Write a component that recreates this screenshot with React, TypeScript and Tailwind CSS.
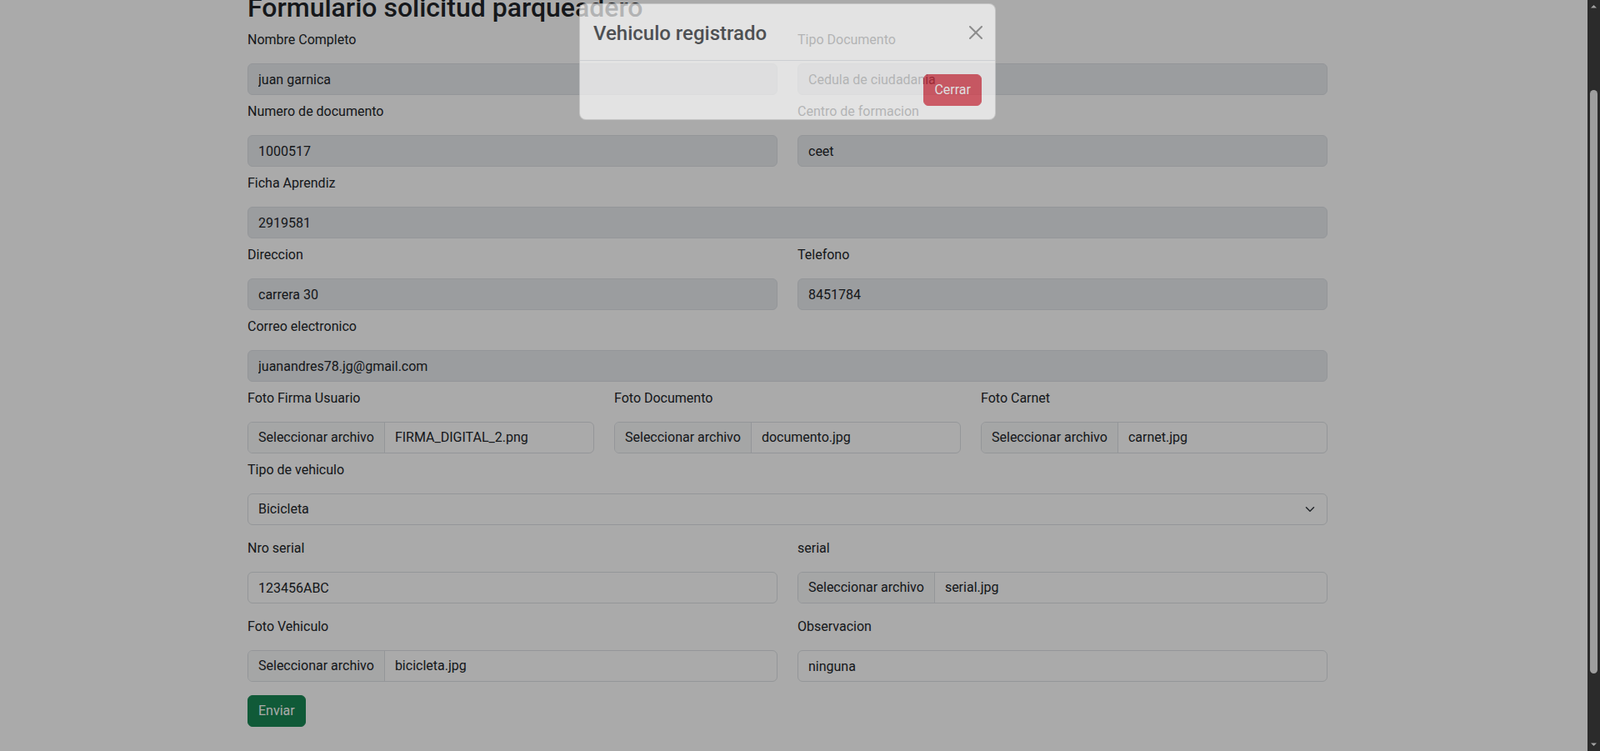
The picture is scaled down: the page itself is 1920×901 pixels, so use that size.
import type { ReactNode } from 'react'

// Bootstrap-style parking request form, captured mid-fade of a "registered" modal.
const labelCls = 'block mb-4 text-base leading-6 text-[#212529]'
const inputCls =
  'block h-[38px] w-full rounded-md border border-[#dee2e6] px-3 text-base leading-6 text-[#212529] outline-none'

function Field({ label, children, last }: { label: string; children: ReactNode; last?: boolean }) {
  return (
    <div className={last ? 'mb-4' : 'mb-2'}>
      <label className={labelCls}>{label}</label>
      {children}
    </div>
  )
}

function TextInput({ value, disabled }: { value: string; disabled?: boolean }) {
  return (
    <input
      readOnly
      value={value}
      className={disabled ? `${inputCls} bg-[#e9ecef]` : `${inputCls} bg-white`}
    />
  )
}

function FileInput({ name }: { name: string }) {
  return (
    <div className="flex h-[38px] w-full items-stretch overflow-hidden rounded-md border border-[#dee2e6] bg-white text-base leading-6 text-[#212529]">
      <span className="flex items-center border-r border-[#dee2e6] bg-[#f8f9fa] px-3">Seleccionar archivo</span>
      <span className="flex items-center px-3">{name}</span>
    </div>
  )
}

function Scrollbar() {
  return (
    <div className="flex h-[901px] w-[15px] shrink-0 flex-col items-center bg-[#2b2b2b]">
      <svg width="15" height="15" viewBox="0 0 15 15" className="shrink-0">
        <path d="M4 9.5 7.5 6 11 9.5Z" fill="#a3a3a3" />
      </svg>
      <div className="mt-[93px] h-[700px] w-[9px] rounded-full bg-[#9e9e9e]" />
      <svg width="15" height="15" viewBox="0 0 15 15" className="mt-auto shrink-0">
        <path d="M4 5.5 7.5 9 11 5.5Z" fill="#a3a3a3" />
      </svg>
    </div>
  )
}

function Modal() {
  return (
    <div className="absolute inset-0 pr-[15px]">
      <div className="mx-auto mt-[4px] w-[500px] rounded-lg border border-black/[0.175] bg-white opacity-[0.67]">
        <div className="flex h-[68px] items-center justify-between border-b border-[#dee2e6] pl-4 pr-[15px]">
          <h4 className="mt-[2px] text-2xl font-medium leading-9 text-[#212529]">Vehiculo registrado</h4>
          <button type="button" aria-label="Close" className="opacity-50">
            <svg width="16" height="16" viewBox="0 0 16 16">
              <path
                d="M.293.293a1 1 0 0 1 1.414 0L8 6.586 14.293.293a1 1 0 1 1 1.414 1.414L9.414 8l6.293 6.293a1 1 0 0 1-1.414 1.414L8 9.414l-6.293 6.293a1 1 0 0 1-1.414-1.414L6.586 8 .293 1.707a1 1 0 0 1 0-1.414"
                fill="#000"
              />
            </svg>
          </button>
        </div>
        <div className="flex justify-end p-4">
          <button
            type="button"
            className="h-[38px] rounded-md border border-[#dc3545] bg-[#dc3545] px-3 text-base leading-6 text-white"
          >
            Cerrar
          </button>
        </div>
      </div>
    </div>
  )
}

export default function App() {
  return (
    <div className="flex h-[901px] w-full overflow-hidden bg-white font-['Roboto','Liberation_Sans',sans-serif]">
      <div className="relative flex-1 overflow-hidden pr-[15px]">
        <div className="mx-auto w-[1296px]">
          <h2 className="-mt-[10px] mb-2 text-[32px] font-medium leading-[1.2] text-[#212529]">
            Formulario solicitud parqueadero
          </h2>

          <div className="grid grid-cols-2 gap-x-6">
            <Field label="Nombre Completo">
              <TextInput value="juan garnica" disabled />
            </Field>
            <Field label="Tipo Documento">
              <TextInput value="Cedula de ciudadania" disabled />
            </Field>
            <Field label="Numero de documento">
              <TextInput value="1000517" disabled />
            </Field>
            <Field label="Centro de formacion">
              <TextInput value="ceet" disabled />
            </Field>
          </div>

          <Field label="Ficha Aprendiz">
            <TextInput value="2919581" disabled />
          </Field>

          <div className="grid grid-cols-2 gap-x-6">
            <Field label="Direccion">
              <TextInput value="carrera 30" disabled />
            </Field>
            <Field label="Telefono">
              <TextInput value="8451784" disabled />
            </Field>
          </div>

          <Field label="Correo electronico">
            <TextInput value="juanandres78.jg@gmail.com" disabled />
          </Field>

          <div className="grid grid-cols-3 gap-x-6">
            <Field label="Foto Firma Usuario">
              <FileInput name="FIRMA_DIGITAL_2.png" />
            </Field>
            <Field label="Foto Documento">
              <FileInput name="documento.jpg" />
            </Field>
            <Field label="Foto Carnet">
              <FileInput name="carnet.jpg" />
            </Field>
          </div>

          <Field label="Tipo de vehiculo" last>
            <div className="flex h-[38px] w-full items-center justify-between rounded-md border border-[#dee2e6] bg-white pl-3 pr-3 text-base leading-6 text-[#212529]">
              <span>Bicicleta</span>
              <svg width="16" height="12" viewBox="0 0 16 16">
                <path d="m2 5 6 6 6-6" fill="none" stroke="#343a40" strokeWidth="2" strokeLinecap="round" strokeLinejoin="round" />
              </svg>
            </div>
          </Field>

          <div className="grid grid-cols-2 gap-x-6">
            <Field label="Nro serial" last>
              <TextInput value="123456ABC" />
            </Field>
            <Field label="serial" last>
              <FileInput name="serial.jpg" />
            </Field>
            <Field label="Foto Vehiculo" last>
              <FileInput name="bicicleta.jpg" />
            </Field>
            <Field label="Observacion" last>
              <TextInput value="ninguna" />
            </Field>
          </div>

          <button
            type="button"
            className="h-[38px] rounded-md border border-[#198754] bg-[#198754] px-3 text-base leading-6 text-white"
          >
            Enviar
          </button>
        </div>

        <div className="absolute inset-0 bg-black/[0.333]" />
        <Modal />
      </div>
      <Scrollbar />
    </div>
  )
}
